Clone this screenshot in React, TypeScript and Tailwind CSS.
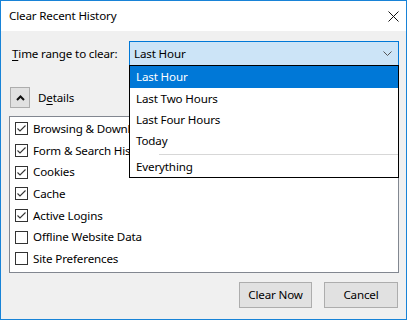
import React from "react"

const items: { label: string; checked: boolean }[] = [
  { label: "Browsing & Download History", checked: true },
  { label: "Form & Search History", checked: true },
  { label: "Cookies", checked: true },
  { label: "Cache", checked: true },
  { label: "Active Logins", checked: true },
  { label: "Offline Website Data", checked: false },
  { label: "Site Preferences", checked: false },
]

function CheckBox({ checked }: { checked: boolean }) {
  return (
    <span className="w-[13px] h-[13px] border border-[#333333] bg-white flex items-center justify-center shrink-0">
      {checked && (
        <svg width="11" height="11" viewBox="0 0 11 11">
          <polyline points="1.5,5.5 4,8 9.5,2.5" fill="none" stroke="#333333" strokeWidth="1.1" />
        </svg>
      )}
    </span>
  )
}

export default function App() {
  return (
    <div className="w-[410px] h-[321px] bg-white" style={{ fontFamily: '"Noto Sans", "Open Sans", sans-serif' }}>
      <div className="relative w-[407px] h-[320px] border border-[#1883d7] flex flex-col text-[11.6px] tracking-[-0.15px] text-black">
        {/* title bar */}
        <div className="h-[30px] bg-white flex items-center justify-between pl-[8px] pr-[7px] shrink-0">
          <span>Clear Recent History</span>
          <svg width="11" height="11" viewBox="0 0 11 11">
            <path d="M0.5 0.5 L10.5 10.5 M10.5 0.5 L0.5 10.5" stroke="#111" strokeWidth="1" />
          </svg>
        </div>

        <div className="flex-1 bg-[#f0f0f0] flex flex-col pl-[8px] pr-[7px]">
          {/* time range */}
          <div className="flex items-center mt-[10px] h-[25px]">
            <span className="pl-[3px] w-[120px]">
              <span className="underline underline-offset-2">T</span>ime range to clear:
            </span>
            <div className="flex-1 h-[25px] border border-[#0078d7] bg-[#cce4f7] flex items-center justify-between pl-[4px] pr-[6px]">
              <span>Last Hour</span>
              <svg width="9" height="6" viewBox="0 0 9 6">
                <polyline points="0.5,0.5 4.5,4.5 8.5,0.5" fill="none" stroke="#555" strokeWidth="1" />
              </svg>
            </div>
          </div>

          {/* details toggle */}
          <div className="flex items-center mt-[21px] h-[21px]">
            <div className="ml-[1px] w-[20px] h-[21px] bg-[#e1e1e1] border border-[#adadad] flex items-center justify-center">
              <svg width="9" height="6" viewBox="0 0 9 6">
                <polyline points="1,5 4.5,1.5 8,5" fill="none" stroke="#111" strokeWidth="2" />
              </svg>
            </div>
            <span className="ml-[8px]">
              D<span className="underline underline-offset-2">e</span>tails
            </span>
          </div>

          {/* list */}
          <div className="mt-[8px] h-[157px] bg-white border border-[#828790] pt-[1px] flex flex-col">
            {items.map((it) => (
              <div key={it.label} className="h-[21.67px] flex items-center pl-[5px] gap-[5px]">
                <CheckBox checked={it.checked} />
                <span className="whitespace-nowrap">{it.label}</span>
              </div>
            ))}
          </div>

          {/* buttons */}
          <div className="flex justify-end gap-[12px] mt-[9px] pr-[1px]">
            <button className="w-[73px] h-[26px] bg-[#e1e1e1] border border-[#adadad]">Clear Now</button>
            <button className="w-[74px] h-[26px] bg-[#e1e1e1] border border-[#adadad]">Cancel</button>
          </div>
        </div>

        {/* dropdown popup */}
        <div className="absolute left-[128px] top-[64px] w-[270px] bg-white border border-black flex flex-col">
          <div className="h-[22px] bg-[#0078d7] text-white flex items-center pl-[6px]">Last Hour</div>
          <div className="h-[21px] flex items-center pl-[6px]">Last Two Hours</div>
          <div className="h-[21px] flex items-center pl-[6px]">Last Four Hours</div>
          <div className="h-[21px] flex items-center pl-[6px]">Today</div>
          <div className="h-[6px] flex items-center pl-[29px]">
            <div className="h-px w-full bg-[#d7d7d7]" />
          </div>
          <div className="h-[20px] flex items-center pl-[6px]">Everything</div>
        </div>
      </div>
    </div>
  )
}
